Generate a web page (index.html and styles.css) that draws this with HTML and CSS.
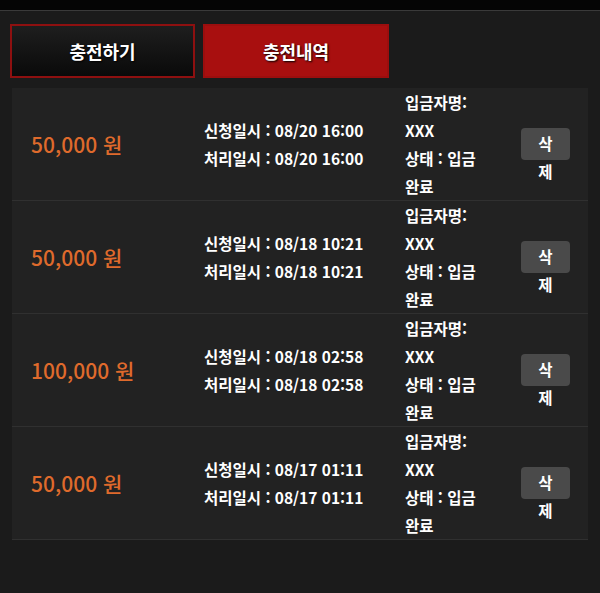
FILE: index.html
```html
<!DOCTYPE html>
<html lang="ko">
<head>
<meta charset="utf-8">
<link rel="stylesheet" href="styles.css">
</head>
<body>
<div class="topbar"></div>
<div class="tabs">
  <div class="tab">충전하기</div>
  <div class="tab active">충전내역</div>
</div>
<div class="list">
  <div class="row">
    <div class="amount">50,000 원</div>
    <div class="dates"><div>신청일시 : 08/20 16:00</div><div>처리일시 : 08/20 16:00</div></div>
    <div class="info"><div>입금자명: XXX</div><div>상태 : 입금 완료</div></div>
    <div class="act"><div class="del">삭제</div></div>
  </div>
  <div class="row">
    <div class="amount">50,000 원</div>
    <div class="dates"><div>신청일시 : 08/18 10:21</div><div>처리일시 : 08/18 10:21</div></div>
    <div class="info"><div>입금자명: XXX</div><div>상태 : 입금 완료</div></div>
    <div class="act"><div class="del">삭제</div></div>
  </div>
  <div class="row">
    <div class="amount">100,000 원</div>
    <div class="dates"><div>신청일시 : 08/18 02:58</div><div>처리일시 : 08/18 02:58</div></div>
    <div class="info"><div>입금자명: XXX</div><div>상태 : 입금 완료</div></div>
    <div class="act"><div class="del">삭제</div></div>
  </div>
  <div class="row">
    <div class="amount">50,000 원</div>
    <div class="dates"><div>신청일시 : 08/17 01:11</div><div>처리일시 : 08/17 01:11</div></div>
    <div class="info"><div>입금자명: XXX</div><div>상태 : 입금 완료</div></div>
    <div class="act"><div class="del">삭제</div></div>
  </div>
</div>
</body>
</html>
```
FILE: styles.css
```css
* { box-sizing: border-box; }
html, body { margin: 0; padding: 0; }
body {
  background: #1b1b1b;
  width: 600px;
  height: 593px;
  font-family: "Noto Sans CJK KR", "Noto Sans", sans-serif;
  color: #fff;
}
.topbar {
  height: 11px;
  background: #050505;
  border-bottom: 1px solid #3a3a3a;
}
.tabs {
  display: flex;
  gap: 8px;
  padding: 13px 0 0 10px;
}
.tab {
  width: 185px;
  height: 54px;
  display: flex;
  align-items: center;
  justify-content: center;
  font-size: 18px;
  font-weight: 700;
  text-shadow: 1px 1px 2px #000;
  background: linear-gradient(#1e1e1e, #0a0a0a);
  border: 2px solid #8e1010;
}
.tab.active {
  width: 186px;
  background: #a80f0f;
  border-color: #9c0e0e;
}
.list {
  margin: 10px 12px 0 12px;
  background: #222222;
}
.row {
  display: flex;
  align-items: center;
  border-bottom: 1px solid #303030;
  font-size: 15.5px;
  font-weight: 700;
  line-height: 28px;
  word-break: keep-all;
}
.amount {
  width: 192px;
  padding-left: 19px;
  color: #df6a2c;
  font-size: 21px;
  font-weight: 500;
}
.dates {
  width: 201px;
}
.info {
  width: 90px;
  margin-right: 4px;
}
.act {
  flex: 1;
  display: flex;
  justify-content: center;
  padding-left: 4px;
}
.del {
  width: 49px;
  height: 32px;
  padding: 1px 12px 0;
  background: #4a4a4a;
  border-radius: 4px;
  text-align: center;
  word-break: break-all;
}
```
